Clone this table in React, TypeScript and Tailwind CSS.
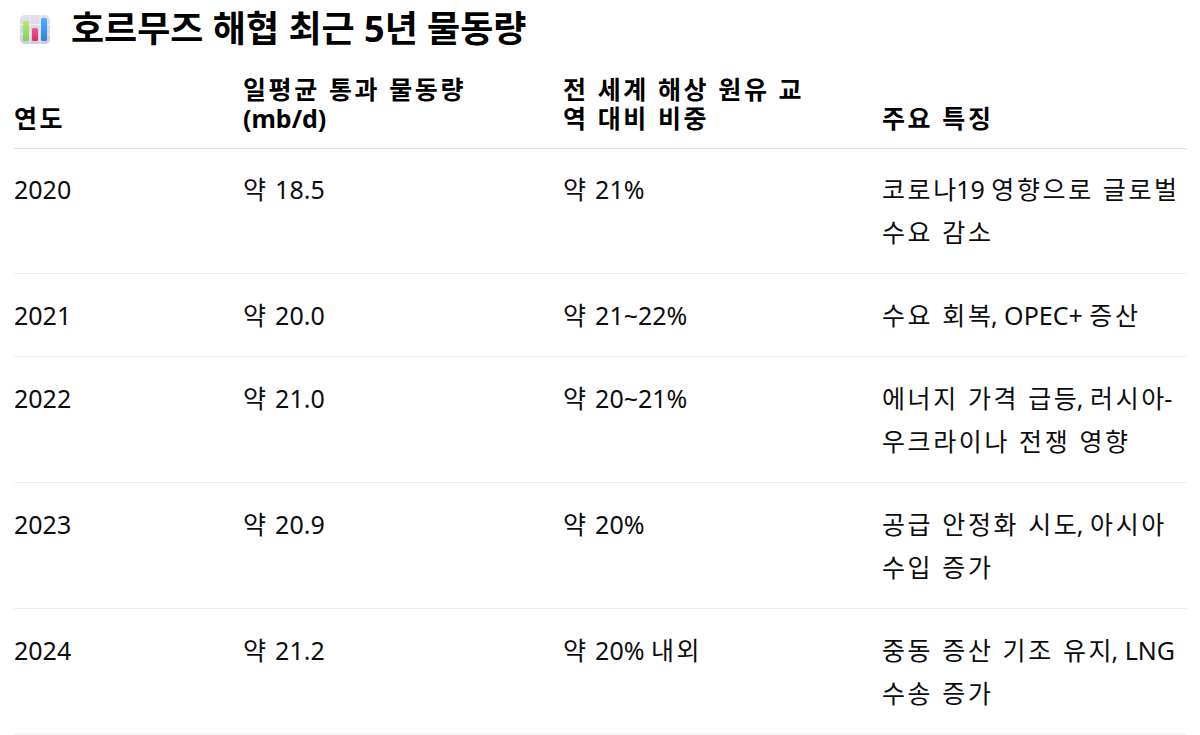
import React from "react";

const font = { fontFamily: '"Noto Sans", "Noto Sans CJK KR", sans-serif' };

function K({ t, c }: { t: string; c: string }) {
  const parts = t.split(/([\uAC00-\uD7A3]+(?: [\uAC00-\uD7A3]+)*)/);
  return (
    <>
      {parts.map((p, i) => {
        if (i % 2 === 0) return <React.Fragment key={i}>{p}</React.Fragment>;
        const next = parts[i + 1] ?? "";
        if (next.startsWith(" ")) {
          return (
            <span key={i} className={c}>
              {p}
            </span>
          );
        }
        return (
          <React.Fragment key={i}>
            <span className={c}>{p.slice(0, -1)}</span>
            {p.slice(-1)}
          </React.Fragment>
        );
      })}
    </>
  );
}

function Lines({ lines, c }: { lines: string[]; c: string }) {
  return (
    <>
      {lines.map((l, i) => (
        <React.Fragment key={i}>
          {i > 0 && <br />}
          <K t={l} c={c} />
        </React.Fragment>
      ))}
    </>
  );
}

function ChartIcon() {
  return (
    <svg width="32" height="32" viewBox="0 0 32 32" aria-hidden>
      <defs>
        <linearGradient id="bg" x1="0" y1="0" x2="0" y2="1">
          <stop offset="0" stopColor="#e4dfec" />
          <stop offset="1" stopColor="#cfc9dd" />
        </linearGradient>
        <linearGradient id="g1" x1="0" y1="0" x2="0" y2="1">
          <stop offset="0" stopColor="#b2ec6f" />
          <stop offset="1" stopColor="#7fd35a" />
        </linearGradient>
        <linearGradient id="g2" x1="0" y1="0" x2="0" y2="1">
          <stop offset="0" stopColor="#f4588f" />
          <stop offset="1" stopColor="#d72c68" />
        </linearGradient>
        <linearGradient id="g3" x1="0" y1="0" x2="0" y2="1">
          <stop offset="0" stopColor="#45b3ff" />
          <stop offset="1" stopColor="#2a82e4" />
        </linearGradient>
      </defs>
      <rect x="1" y="2" width="30" height="29" rx="5" fill="url(#bg)" />
      <path d="M11 2v29M21 2v29M1 11.5h30M1 21h30" stroke="#f1eef5" strokeWidth="1" />
      <rect x="4" y="8" width="6" height="20" rx="1.5" fill="url(#g1)" />
      <rect x="13" y="15" width="6" height="13" rx="1.5" fill="url(#g2)" />
      <rect x="22" y="5" width="6" height="23" rx="1.5" fill="url(#g3)" />
    </svg>
  );
}

const rows: { y: string; v: string; s: string; d: string[] }[] = [
  { y: "2020", v: "약 18.5", s: "약 21%", d: ["코로나19 영향으로 글로벌", "수요 감소"] },
  { y: "2021", v: "약 20.0", s: "약 21~22%", d: ["수요 회복, OPEC+ 증산"] },
  { y: "2022", v: "약 21.0", s: "약 20~21%", d: ["에너지 가격 급등, 러시아-", "우크라이나 전쟁 영향"] },
  { y: "2023", v: "약 20.9", s: "약 20%", d: ["공급 안정화 시도, 아시아", "수입 증가"] },
  { y: "2024", v: "약 21.2", s: "약 20% 내외", d: ["중동 증산 기조 유지, LNG", "수송 증가"] },
];

const th = "text-left align-bottom pb-[15px] text-[25px] font-bold leading-[29px] text-black";
const HT = "tracking-[2.6px]";
const BT = "tracking-[2.6px]";

export default function App() {
  return (
    <div className="w-[1200px] h-[735px] overflow-hidden bg-white px-[14px] text-[#0d0d0d]" style={font}>
      <div className="flex items-center pt-[9px] h-[49px]">
        <div className="ml-[5px] mr-[20px] flex items-center">
          <ChartIcon />
        </div>
        <h3 className="text-[36px] font-bold leading-[40px] text-black">호르무즈 해협 최근 5년 물동량</h3>
      </div>
      <table className="mt-[26px] w-[1173px] table-fixed border-collapse">
        <colgroup>
          <col className="w-[229px]" />
          <col className="w-[320px]" />
          <col className="w-[319px]" />
          <col />
        </colgroup>
        <thead>
          <tr className="border-b border-[#e0e0e0]">
            <th className={th}>
              <Lines lines={["연도"]} c={HT} />
            </th>
            <th className={th}>
              <Lines lines={["일평균 통과 물동량", "(mb/d)"]} c={HT} />
            </th>
            <th className={th}>
              <Lines lines={["전 세계 해상 원유 교", "역 대비 비중"]} c={HT} />
            </th>
            <th className={th}>
              <Lines lines={["주요 특징"]} c={HT} />
            </th>
          </tr>
        </thead>
        <tbody>
          {rows.map((r, i) => {
            const td =
              i === 0
                ? "align-top pt-[19px] pb-[19px] text-[25px] leading-[43px] whitespace-nowrap"
                : "align-top pt-[20px] pb-[19px] text-[25px] leading-[43px] whitespace-nowrap";
            return (
              <tr key={r.y} className="border-b border-[#efefef]">
                <td className={td}>{r.y}</td>
                <td className={td}>
                  <K t={r.v} c={BT} />
                </td>
                <td className={td}>
                  <K t={r.s} c={BT} />
                </td>
                <td className={td}>
                  <Lines lines={r.d} c={BT} />
                </td>
              </tr>
            );
          })}
        </tbody>
      </table>
    </div>
  );
}
